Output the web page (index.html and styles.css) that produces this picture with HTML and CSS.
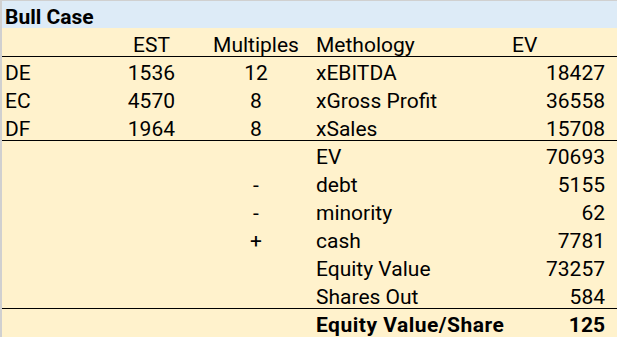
FILE: index.html
```html
<!DOCTYPE html>
<html lang="en">
<head>
<meta charset="utf-8">
<title>Bull Case</title>
<link rel="stylesheet" href="styles.css">
</head>
<body>
<div class="sheet">
  <div class="title">Bull Case</div>
  <div class="row">
    <div class="c a"></div>
    <div class="c b est">EST</div>
    <div class="c m">Multiples</div>
    <div class="c d">Methology</div>
    <div class="c e-left">EV</div>
  </div>
  <div class="row rule">
    <div class="c a">DE</div>
    <div class="c b">1536</div>
    <div class="c m">12</div>
    <div class="c d">xEBITDA</div>
    <div class="c e">18427</div>
  </div>
  <div class="row">
    <div class="c a">EC</div>
    <div class="c b">4570</div>
    <div class="c m">8</div>
    <div class="c d">xGross Profit</div>
    <div class="c e">36558</div>
  </div>
  <div class="row">
    <div class="c a">DF</div>
    <div class="c b">1964</div>
    <div class="c m">8</div>
    <div class="c d">xSales</div>
    <div class="c e">15708</div>
  </div>
  <div class="row rule">
    <div class="c a"></div>
    <div class="c b"></div>
    <div class="c m"></div>
    <div class="c d">EV</div>
    <div class="c e">70693</div>
  </div>
  <div class="row">
    <div class="c a"></div>
    <div class="c b"></div>
    <div class="c m op">-</div>
    <div class="c d">debt</div>
    <div class="c e">5155</div>
  </div>
  <div class="row">
    <div class="c a"></div>
    <div class="c b"></div>
    <div class="c m op">-</div>
    <div class="c d">minority</div>
    <div class="c e">62</div>
  </div>
  <div class="row">
    <div class="c a"></div>
    <div class="c b"></div>
    <div class="c m op">+</div>
    <div class="c d">cash</div>
    <div class="c e">7781</div>
  </div>
  <div class="row">
    <div class="c a"></div>
    <div class="c b"></div>
    <div class="c m"></div>
    <div class="c d">Equity Value</div>
    <div class="c e">73257</div>
  </div>
  <div class="row">
    <div class="c a"></div>
    <div class="c b"></div>
    <div class="c m"></div>
    <div class="c d">Shares Out</div>
    <div class="c e">584</div>
  </div>
  <div class="row rule total">
    <div class="c a"></div>
    <div class="c b"></div>
    <div class="c m"></div>
    <div class="c d">Equity Value/Share</div>
    <div class="c e">125</div>
  </div>
</div>
</body>
</html>
```
FILE: styles.css
```css
html, body {
  margin: 0;
  padding: 0;
  background: #fff2cc;
}

body {
  width: 617px;
  height: 337px;
  overflow: hidden;
  font-family: Roboto, "Liberation Sans", sans-serif;
  font-size: 21px;
  color: #000;
}

.sheet {
  border-left: 2px solid #d0d0d0;
  height: 337px;
  box-sizing: border-box;
  background: #fff2cc;
}

.title {
  height: 28px;
  box-sizing: border-box;
  border-top: 1px solid #d0d0d0;
  background: #ddebf7;
  font-weight: bold;
  line-height: 22px;
  padding-top: 5px;
  padding-left: 3px;
  white-space: nowrap;
}

.row {
  display: grid;
  grid-template-columns: 98px 100px 112px 196px 1fr;
  height: 28px;
  box-sizing: border-box;
}

.row.rule {
  border-top: 1px solid #000;
}

.row.total {
  font-weight: bold;
}

.row.total .d {
  letter-spacing: 0.5px;
}

.c {
  white-space: nowrap;
  line-height: 22px;
  padding-top: 6px;
}

.rule .c {
  padding-top: 5px;
}

.a {
  padding-left: 3px;
}

.b {
  text-align: right;
  padding-right: 25px;
}

.b.est {
  padding-right: 30px;
}

.m {
  text-align: center;
}

.d {
  padding-left: 4px;
}

.e {
  text-align: right;
  padding-right: 12px;
}

.e-left {
  padding-left: 4px;
}
```
